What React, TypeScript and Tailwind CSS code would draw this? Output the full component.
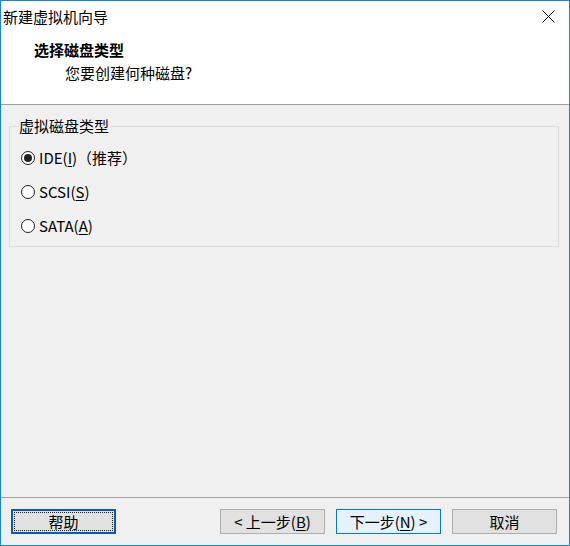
import type { ReactNode } from 'react'

function Radio({ checked, children }: { checked?: boolean; children: ReactNode }) {
  return (
    <div className="flex items-center h-[34px] gap-[4px]">
      <span className="w-[14px] h-[14px] rounded-full border border-[#222] bg-white flex items-center justify-center shrink-0">
        {checked && <span className="w-[8px] h-[8px] rounded-full bg-[#222]" />}
      </span>
      <span className="leading-[20px]">{children}</span>
    </div>
  )
}

function Btn({ children, primary, focused }: { children: ReactNode; primary?: boolean; focused?: boolean }) {
  let cls = 'w-[105px] h-[25px] flex items-center justify-center leading-[20px] border '
  if (primary) cls += 'border-[#0078d7] bg-[#e5f1fb]'
  else if (focused) cls += 'border-2 border-[#0a5bb4] bg-[#e1e1e1] outline outline-1 outline-dotted outline-[#222] outline-offset-[-4px]'
  else cls += 'border-[#adadad] bg-[#e1e1e1]'
  return <button className={cls}>{children}</button>
}

export default function App() {
  return (
    <div className="w-[570px] h-[546px] border border-[#1883d7] bg-[#f0f0f0] flex flex-col text-[15px] text-black font-['Noto_Sans_CJK_SC',sans-serif] overflow-hidden">
      {/* header */}
      <div className="bg-white border-b border-[#a0a0a0] h-[104px] shrink-0">
        <div className="flex items-start justify-between pl-[2px] pt-[6px]">
          <span className="leading-[20px]">新建虚拟机向导</span>
          <svg width="13" height="13" viewBox="0 0 13 13" className="mt-[3px] mr-[14px]">
            <path d="M0.5 0.5 L12.5 12.5 M12.5 0.5 L0.5 12.5" stroke="#000" strokeWidth="1" />
          </svg>
        </div>
        <div className="pl-[33px] mt-[13px] leading-[20px] font-bold">选择磁盘类型</div>
        <div className="pl-[64px] mt-[3px] leading-[20px]">您要创建何种磁盘?</div>
      </div>

      {/* body */}
      <div className="flex-1">
        <fieldset className="ml-[8px] mr-[10px] mt-[11px] border border-[#dcdcdc] px-[11px] pt-[5px] pb-[3px]">
          <legend className="-ml-[3px] px-[1px] leading-[20px]">虚拟磁盘类型</legend>
          <Radio checked>
            IDE(<span className="underline underline-offset-2">I</span>)（推荐）
          </Radio>
          <Radio>
            SCSI(<span className="underline underline-offset-2">S</span>)
          </Radio>
          <Radio>
            SATA(<span className="underline underline-offset-2">A</span>)
          </Radio>
        </fieldset>
      </div>

      {/* footer */}
      <div className="h-[48px] shrink-0 border-t border-[#a0a0a0] flex items-start pt-[11px] pl-[10px] pr-[12px]">
        <Btn focused>帮助</Btn>
        <div className="ml-auto flex gap-[11px]">
          <Btn>
            &lt; 上一步(<span className="underline underline-offset-2">B</span>)
          </Btn>
          <Btn primary>
            下一步(<span className="underline underline-offset-2">N</span>) &gt;
          </Btn>
          <Btn>取消</Btn>
        </div>
      </div>
    </div>
  )
}
